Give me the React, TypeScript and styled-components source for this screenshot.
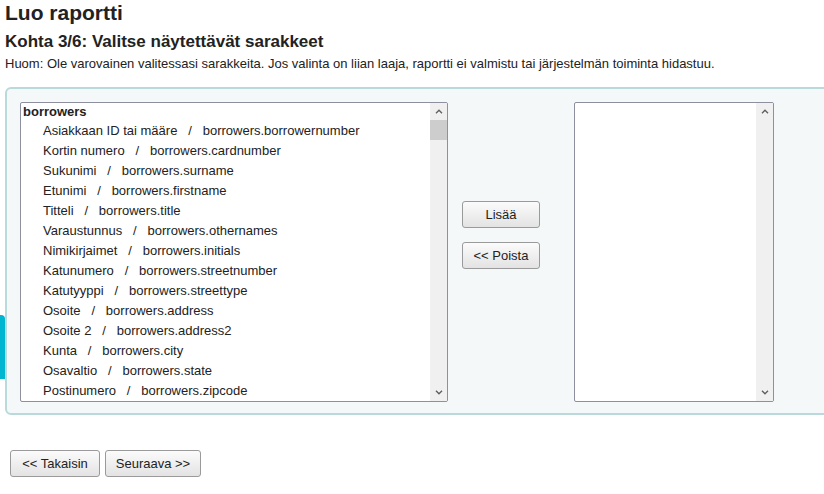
import React from 'react';
import styled, { createGlobalStyle } from 'styled-components';

const GlobalStyle = createGlobalStyle`
  html, body {
    margin: 0;
    padding: 0;
    background: #ffffff;
    overflow: hidden;
  }
  body {
    font-family: Arial, "Liberation Sans", sans-serif;
    color: #000;
  }
`;

const Page = styled.div`
  position: relative;
  padding: 0 0 0 5px;
  width: 840px;
`;

const Title = styled.h1`
  margin: 0;
  padding-top: 1px;
  font-size: 21px;
  line-height: 24px;
  font-weight: bold;
  color: #222;
`;

const Subtitle = styled.h2`
  margin: 7px 0 0;
  font-size: 17px;
  line-height: 20px;
  font-weight: bold;
  color: #222;
`;

const Note = styled.p`
  margin: 4px 0 0;
  font-size: 13px;
  line-height: 16px;
  color: #222;
`;

const Fieldset = styled.div`
  margin-top: 15px;
  width: 830px;
  box-sizing: border-box;
  border: 2px solid #bad9db;
  border-radius: 6px;
  background: #f4f8f9;
  padding: 13px 13px 11px 13px;
  display: flex;
  align-items: flex-start;
`;

const ListBox = styled.div<{ $width: number }>`
  width: ${p => p.$width}px;
  height: 300px;
  box-sizing: border-box;
  border: 1px solid #8e8f9f;
  border-radius: 2px;
  background: #fff;
  display: flex;
  overflow: hidden;
`;

const Options = styled.div`
  flex: 1;
  overflow: hidden;
  font-size: 13px;
  line-height: 20px;
  color: #222;
`;

const Group = styled.div`
  font-weight: bold;
  padding-left: 2px;
  line-height: 18px;
`;

const Option = styled.div`
  padding-left: 22px;
  white-space: pre;
`;

const ScrollTrack = styled.div`
  width: 17px;
  background: #f0f0f0;
  display: flex;
  flex-direction: column;
`;

const Arrow = styled.div`
  height: 17px;
  display: flex;
  align-items: center;
  justify-content: center;
`;

const Thumb = styled.div`
  height: 20px;
  background: #cdcdcd;
`;

const Spacer = styled.div`
  flex: 1;
`;

const Buttons = styled.div`
  margin: 99px 34px 0 14px;
  display: flex;
  flex-direction: column;
  gap: 14px;
`;

const Button = styled.button<{ $width?: number }>`
  width: ${p => (p.$width ? `${p.$width}px` : 'auto')};
  height: 27px;
  box-sizing: border-box;
  padding: 0 8px;
  font-family: Arial, "Liberation Sans", sans-serif;
  font-size: 13px;
  color: #222;
  border: 1px solid #9a9a9a;
  border-radius: 3px;
  background: linear-gradient(#fbfbfb, #e3e3e3);
`;

const Footer = styled.div`
  margin-top: 35px;
  padding-left: 5px;
  display: flex;
  gap: 5px;
`;

const EdgeTab = styled.div`
  position: absolute;
  left: 0;
  top: 315px;
  width: 5px;
  height: 64px;
  background: #00b5cf;
  border-top-right-radius: 4px;
`;

const Chevron = ({ up }: { up?: boolean }) => (
  <svg width="8" height="5" viewBox="0 0 8 5">
    <path
      d={up ? 'M1 4.2 L4 1.2 L7 4.2' : 'M1 0.8 L4 3.8 L7 0.8'}
      fill="none"
      stroke="#606060"
      strokeWidth="1.4"
    />
  </svg>
);

const Scrollbar = ({ thumb }: { thumb?: boolean }) => (
  <ScrollTrack>
    <Arrow>
      <Chevron up />
    </Arrow>
    {thumb && <Thumb />}
    <Spacer />
    <Arrow>
      <Chevron />
    </Arrow>
  </ScrollTrack>
);

const columns: [string, string][] = [
  ['Asiakkaan ID tai määre', 'borrowernumber'],
  ['Kortin numero', 'cardnumber'],
  ['Sukunimi', 'surname'],
  ['Etunimi', 'firstname'],
  ['Titteli', 'title'],
  ['Varaustunnus', 'othernames'],
  ['Nimikirjaimet', 'initials'],
  ['Katunumero', 'streetnumber'],
  ['Katutyyppi', 'streettype'],
  ['Osoite', 'address'],
  ['Osoite 2', 'address2'],
  ['Kunta', 'city'],
  ['Osavaltio', 'state'],
  ['Postinumero', 'zipcode'],
];

export default function App() {
  return (
    <>
      <GlobalStyle />
      <Page>
        <Title>Luo raportti</Title>
        <Subtitle>Kohta 3/6: Valitse näytettävät sarakkeet</Subtitle>
        <Note>
          Huom: Ole varovainen valitessasi sarakkeita. Jos valinta on liian laaja, raportti ei valmistu tai
          järjestelmän toiminta hidastuu.
        </Note>
        <Fieldset>
          <ListBox $width={428}>
            <Options>
              <Group>borrowers</Group>
              {columns.map(([label, field]) => (
                <Option key={field}>{`${label}   /   borrowers.${field}`}</Option>
              ))}
            </Options>
            <Scrollbar thumb />
          </ListBox>
          <Buttons>
            <Button $width={78}>Lisää</Button>
            <Button $width={78}>&lt;&lt; Poista</Button>
          </Buttons>
          <ListBox $width={200}>
            <Options />
            <Scrollbar />
          </ListBox>
        </Fieldset>
        <Footer>
          <Button $width={90}>&lt;&lt; Takaisin</Button>
          <Button $width={96}>Seuraava &gt;&gt;</Button>
        </Footer>
      </Page>
      <EdgeTab />
    </>
  );
}
